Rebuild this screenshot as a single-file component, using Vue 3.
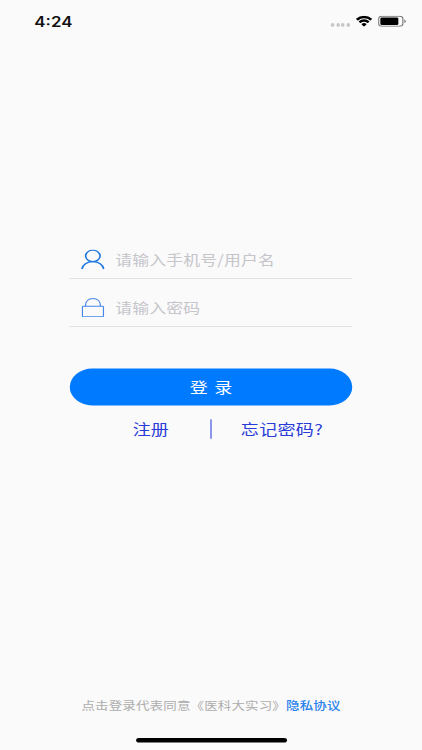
<template>
  <div class="viewport">
    <div class="screen">
      <header class="status-bar">
        <span class="time">4:24</span>
        <div class="status-icons">
          <div class="signal"><i></i><i></i><i></i><i></i></div>
          <svg class="wifi" viewBox="0 0 16 12" preserveAspectRatio="none">
            <path d="M8 2.600c2.200 0 4.200.85 5.700 2.300.1.1.3.1.4 0l1.500-1.400c.1-.1.1-.3 0-.4a11 11 0 0 0-15.200 0c-.1.1-.1.3 0 .4l1.500 1.400c.1.1.3.1.4 0A8.200 8.200 0 0 1 8 2.600z" />
            <path d="M8 6.300c1.200 0 2.300.45 3.200 1.250.1.1.3.1.4 0l1.400-1.350c.1-.1.1-.3 0-.4a7.200 7.200 0 0 0-10 0c-.1.1-.1.3 0 .4l1.400 1.350c.1.1.3.1.4 0A4.800 4.800 0 0 1 8 6.300z" />
            <path d="M10.400 9c.1-.1.1-.3 0-.4a3.600 3.600 0 0 0-4.800 0c-.1.1-.1.3 0 .4l2.100 2.200c.2.2.4.2.6 0z" />
          </svg>
          <svg class="battery" viewBox="0 0 25 12">
            <rect x=".5" y=".5" width="21.500" height="11" rx="2.800" fill="none" stroke="#777" />
            <rect x="2" y="2" width="16" height="8" rx="1.400" />
            <path d="M23.300 4v4c.8-.3 1.300-1.100 1.300-2s-.5-1.700-1.300-2z" fill="#777" />
          </svg>
        </div>
      </header>

      <main class="login">
        <label class="field">
          <svg class="icon" viewBox="0 0 20 22" preserveAspectRatio="none" fill="none" stroke="#1f78e0" stroke-width="1.400">
            <ellipse cx="10" cy="7.100" rx="6.100" ry="6.200" />
            <path d="M.7 21.300C1.500 16.700 5 13.300 10 13.300s8.500 3.400 9.300 8" />
          </svg>
          <input v-model="username" type="text" placeholder="请输入手机号/用户名" />
        </label>
        <label class="field">
          <svg class="icon" viewBox="0 0 20 22" preserveAspectRatio="none" fill="none" stroke="#4686ea" stroke-width="1">
            <rect x="1.200" y="9.500" width="17.800" height="11.300" rx=".8" />
            <path d="M3.900 9.500V7.800C3.900 3.900 6.500 1.200 10.100 1.200s6.200 2.700 6.200 6.600v1.700" />
          </svg>
          <input v-model="password" type="password" placeholder="请输入密码" />
        </label>

        <button class="submit">登 录</button>

        <div class="links">
          <a class="register">注册</a>
          <span class="divider"></span>
          <a class="forgot">忘记密码?</a>
        </div>
      </main>

      <footer class="agreement">
        <span>点击登录代表同意《医科大实习》</span><a>隐私协议</a>
      </footer>
      <div class="home-indicator"></div>
    </div>
  </div>
</template>

<script setup>
import { ref } from 'vue';

const username = ref('');
const password = ref('');
</script>

<style>
body {
  background: #fafafa;
}
</style>

<style scoped>
.viewport {
  width: 422px;
  height: 750px;
  overflow: hidden;
}

/* 375x812 layout stretched to the window */
.screen {
  display: flex;
  flex-direction: column;
  box-sizing: border-box;
  width: 375px;
  height: 812px;
  background: #fafafa;
  font-family: "Noto Sans CJK SC", sans-serif;
  transform: scale(1.12533, 0.92365);
  transform-origin: 0 0;
}

.status-bar {
  display: flex;
  justify-content: space-between;
  align-items: center;
  height: 46px;
  padding: 0 14px 0 30.5px;
}

.time {
  font-family: Inter, sans-serif;
  font-size: 15px;
  font-weight: 600;
  color: #111;
}

.status-icons {
  display: flex;
  align-items: center;
}

.signal {
  display: flex;
  gap: 1.7px;
  margin: 8px 5px 0 0;
}

.signal i {
  width: 3px;
  height: 3.4px;
  border-radius: 50%;
  background: #c6c6c6;
}

.wifi {
  width: 15px;
  height: 12.5px;
  margin-right: 5px;
}

.battery {
  width: 25px;
  height: 12px;
}

.login {
  display: flex;
  flex-direction: column;
  padding: 204px 62px 0;
}

.field {
  display: flex;
  align-items: center;
  box-sizing: border-box;
  height: 52px;
  padding: 10px 0 0 10px;
  border-bottom: 1px solid #dcdde3;
}

.icon {
  flex: none;
  width: 21px;
  height: 22px;
  margin-right: 9.5px;
}

.field input {
  flex: 1;
  min-width: 0;
  padding: 0;
  border: 0;
  outline: 0;
  background: none;
  font-family: inherit;
  font-size: 15px;
  line-height: 22px;
  letter-spacing: 0.1px;
}

.field input::placeholder {
  color: #c5c5ca;
  opacity: 1;
}

.submit {
  height: 40px;
  margin-top: 45px;
  padding: 0;
  border: 0;
  border-radius: 20px;
  background: #007aff;
  color: #fff;
  font-family: inherit;
  font-size: 16px;
  word-spacing: 2px;
}

.links {
  display: flex;
  align-items: center;
  height: 22px;
  margin-top: 14px;
  color: #2a3cd8;
  font-size: 16px;
  line-height: 22px;
}

.register {
  width: 69px;
  padding-left: 56px;
}

.divider {
  width: 1px;
  height: 21px;
  background: #3548dc;
}

.forgot {
  padding-left: 26px;
  letter-spacing: 0.3px;
}

.agreement {
  display: flex;
  justify-content: center;
  margin-top: auto;
  color: #adadad;
  font-size: 12px;
  line-height: 18px;
  letter-spacing: 0.12px;
}

.agreement a {
  color: #2a82ea;
  font-weight: 500;
}

.home-indicator {
  align-self: center;
  width: 134px;
  height: 5px;
  margin: 26px 0 8px;
  border-radius: 3px;
  background: #000;
}
</style>
